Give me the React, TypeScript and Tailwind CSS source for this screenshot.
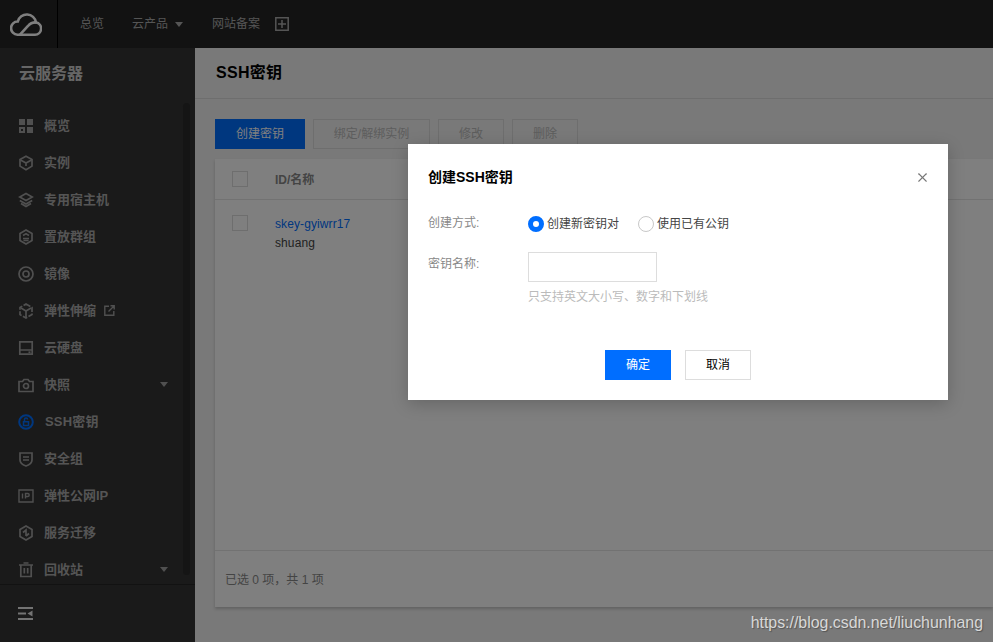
import React from 'react';
import { X } from 'lucide-react';

const FONT = "font-['Liberation_Sans','Noto_Sans_CJK_SC',sans-serif]";

const iconProps = {
  width: 16,
  height: 16,
  viewBox: '0 0 16 16',
  fill: 'none',
  stroke: 'currentColor',
  strokeWidth: 1.7,
};

const icons: Record<string, React.ReactNode> = {
  overview: (
    <svg {...iconProps} fill="currentColor" stroke="none">
      <path d="M1 1h6v6H1zM9 1h6v6H9zM1 9h6v6H1zM9 9h6v6H9z" />
      <path d="M3 11h2v2H3z" fill="#343434" />
    </svg>
  ),
  instance: (
    <svg {...iconProps}>
      <path d="M8 1.200l6 3.300v6.600l-6 3.700-6-3.700V4.500z" />
      <path d="M2.500 5L8 8l5.500-3M8 8v3" />
    </svg>
  ),
  host: (
    <svg {...iconProps}>
      <path d="M8 1.500l6.200 3.500L8 8.500 1.800 5z" />
      <path d="M1.800 8.500L8 12l6.200-3.500M3 11.500L8 14.500l5-3" />
    </svg>
  ),
  group: (
    <svg {...iconProps}>
      <path d="M8 1l6 3.500v7L8 15l-6-3.500v-7z" />
      <path d="M5 6.500L8 4.800l3 1.700M5 9.500h6M5.500 11.500h5" />
    </svg>
  ),
  image: (
    <svg {...iconProps}>
      <circle cx="8" cy="8" r="7" />
      <circle cx="8" cy="8" r="3" />
    </svg>
  ),
  scale: (
    <svg {...iconProps}>
      <path d="M8 1l6 3.500v7L8 15l-6-3.500v-7z" strokeDasharray="5 1.500" />
      <path d="M3 5l5 3 5-3M8 8v6" />
    </svg>
  ),
  disk: (
    <svg {...iconProps}>
      <path d="M1.800 1.800h12.400v12.400H1.800zM2 10h12" />
      <path d="M10.500 12.200h2" />
    </svg>
  ),
  snapshot: (
    <svg {...iconProps}>
      <path d="M1 4.500h3.500L6 2.500h4l1.500 2H15v10H1z" />
      <circle cx="8" cy="9" r="2.500" />
    </svg>
  ),
  ssh: (
    <svg {...iconProps} strokeWidth={2}>
      <circle cx="8" cy="8" r="6.800" />
      <path d="M5.500 7.800h5v3.700h-5zM6.500 7.800V5.500a1.500 1.500 0 013 0" strokeWidth={1.500} />
    </svg>
  ),
  security: (
    <svg {...iconProps}>
      <path d="M2 2h12v7c0 3-3 5-6 6-3-1-6-3-6-6z" />
      <path d="M5 6h6M5 9h6" />
    </svg>
  ),
  ip: (
    <svg {...iconProps} strokeWidth={1.4}>
      <path d="M1 2h14v12H1z" />
      <path d="M4.500 5.500v5M7.500 10.500v-5h2.200a1.500 1.500 0 010 3H7.500" />
    </svg>
  ),
  migrate: (
    <svg {...iconProps}>
      <path d="M8 1l6 3.500v7L8 15l-6-3.500v-7z" />
      <path d="M5 7.500L8 5v6M11 8.500L8 11" />
    </svg>
  ),
  recycle: (
    <svg {...iconProps}>
      <path d="M1 3h14M5.500 1h5M2.800 3v11.500h10.400V3M6.300 6v5.500M9.700 6v5.500" />
    </svg>
  ),
};

const menu = [
  { key: 'overview', label: '概览' },
  { key: 'instance', label: '实例' },
  { key: 'host', label: '专用宿主机' },
  { key: 'group', label: '置放群组' },
  { key: 'image', label: '镜像' },
  { key: 'scale', label: '弹性伸缩', external: true },
  { key: 'disk', label: '云硬盘' },
  { key: 'snapshot', label: '快照', arrow: true },
  { key: 'ssh', label: 'SSH密钥', active: true },
  { key: 'security', label: '安全组' },
  { key: 'ip', label: '弹性公网IP' },
  { key: 'migrate', label: '服务迁移' },
  { key: 'recycle', label: '回收站', arrow: true },
];

function Caret({ className }: { className: string }) {
  return <span className={`h-0 w-0 border-x-[4px] border-t-[5px] border-x-transparent ${className}`} />;
}

function TopBar() {
  return (
    <header className="flex h-12 shrink-0 items-center bg-[#242424] text-xs text-[#aaaaaa]">
      <div className="flex h-12 w-[58px] shrink-0 items-center border-r border-black pb-[1px] pl-[10px]">
        <svg width="32" height="24" viewBox="0 0 32 24" fill="none" stroke="#ffffff" strokeWidth="2.600">
          <path d="M7.500 22.700H25a6.200 6.200 0 001-12.300A9.300 9.300 0 007.800 9.500a6.600 6.600 0 00-.3 13.200z" />
          <path d="M10 22.700l8-8.700c2-2.500 5-3.700 8-3.600" />
        </svg>
      </div>
      <span className="ml-[22px]">总览</span>
      <span className="ml-[28px]">云产品</span>
      <Caret className="ml-[7px] border-t-[#aaaaaa]" />
      <span className="ml-[29px]">网站备案</span>
      <svg className="ml-[15px]" width="14" height="14" viewBox="0 0 14 14" fill="none" stroke="#aaaaaa" strokeWidth="1.500">
        <path d="M.8.800h12.400v12.400H.8zM7 3v8M3 7h8" />
      </svg>
    </header>
  );
}

function Sidebar() {
  return (
    <aside className="relative flex w-[195px] shrink-0 flex-col bg-[#343434]">
      <div className="pl-[19px] pt-[15px] text-base leading-[22px] font-bold text-[#cccccc]">云服务器</div>
      <span className="absolute left-[183px] top-[55px] bottom-[67px] w-[7px] rounded bg-[#2a2a2a]" />
      <nav className="flex-1 overflow-hidden pl-[18px] pt-[22px]">
        {menu.map((item) => (
          <div key={item.key} className="flex h-[37px] items-center pr-[27px] text-[13px] font-semibold text-[#aaaaaa]">
            <span className={item.active ? 'text-[#006eff]' : 'text-[#a0a0a0]'}>{icons[item.key]}</span>
            <span className={`ml-[10px] ${item.active ? 'ml-[11px] tracking-[0.2px]' : ''}`}>{item.label}</span>
            {item.external && (
              <svg className="ml-[8px]" width="11" height="11" viewBox="0 0 11 11" fill="none" stroke="#a0a0a0" strokeWidth="1.400">
                <path d="M5 1.200H.8v9h9V6M4.500 6.500L10 1M6.500 .8h3.700v3.700" />
              </svg>
            )}
            {item.arrow && <Caret className="ml-auto border-t-[#a0a0a0]" />}
          </div>
        ))}
      </nav>
      <div className="flex h-[58px] shrink-0 items-center border-t border-[#242424] pl-[18px]">
        <svg width="15" height="13" viewBox="0 0 15 13" fill="#e6e6e6">
          <path d="M0 0h15v2H0zM0 5.500h8v2H0zM0 11h15v2H0zM14.500 3.500v6L9.500 6.500z" />
        </svg>
      </div>
    </aside>
  );
}

function Toolbar() {
  const disabled = 'flex h-[30px] items-center justify-center border border-[#dddddd] bg-[#f2f2f2] text-xs text-[#bbbbbb]';
  return (
    <div className="flex gap-2 pt-5">
      <button className="h-[30px] w-[90px] bg-[#006eff] text-xs text-white">创建密钥</button>
      <button className={`${disabled} w-[117px]`}>绑定/解绑实例</button>
      <button className={`${disabled} w-[66px]`}>修改</button>
      <button className={`${disabled} w-[66px]`}>删除</button>
    </div>
  );
}

function Checkbox() {
  return <span className="block h-4 w-4 border border-[#dddddd] bg-white" />;
}

function KeyTable() {
  return (
    <div className="mt-[10px] flex h-[448px] flex-col bg-white text-xs shadow-[0_2px_3px_rgba(0,0,0,0.2)]">
      <div className="flex h-[41px] shrink-0 items-center border-b border-[#e5e5e5] pl-[17px]">
        <Checkbox />
        <span className="ml-[27px] pt-[2px] font-bold text-[#888888]">ID/名称</span>
      </div>
      <div className="flex flex-1 items-start pl-[17px] pt-[15px]">
        <Checkbox />
        <div className="ml-[27px] leading-[19px] tracking-[0.1px]">
          <div className="text-[#006eff]">skey-gyiwrr17</div>
          <div className="text-[#444444]">shuang</div>
        </div>
      </div>
      <div className="flex h-[57px] shrink-0 items-center border-t border-[#e5e5e5] pl-[10px] pt-[2px] text-[#888888]">
        已选 0 项，共 1 项
      </div>
    </div>
  );
}

function KeyDialog() {
  return (
    <div className="absolute left-[408px] top-[144px] flex h-[256px] w-[540px] flex-col bg-white px-5 shadow-[0_4px_16px_rgba(0,0,0,0.2)]">
      <div className="flex items-center justify-between pt-[23px]">
        <h3 className="text-sm leading-5 font-bold text-black">创建SSH密钥</h3>
        <X size={15} strokeWidth={1.8} className="mr-[-2px] text-[#777777]" />
      </div>
      <div className="mt-[29px] flex h-4 items-center text-xs">
        <span className="w-[100px] pb-[2px] text-[#888888]">创建方式:</span>
        <span className="h-4 w-4 rounded-full border-[5px] border-[#006eff] bg-white" />
        <span className="ml-[3px] text-[#444444]">创建新密钥对</span>
        <span className="ml-[19px] h-4 w-4 rounded-full border border-[#c8c8c8] bg-white" />
        <span className="ml-[3px] text-[#444444]">使用已有公钥</span>
      </div>
      <div className="mt-[20px] flex text-xs">
        <span className="w-[100px] pt-[4px] text-[#888888]">密钥名称:</span>
        <div>
          <input className="block h-[30px] w-[129px] border border-[#dddddd] bg-white outline-none" />
          <p className="mt-[7px] leading-4 text-[#bbbbbb]">只支持英文大小写、数字和下划线</p>
        </div>
      </div>
      <div className="mt-[45px] flex justify-center gap-[14px] text-xs">
        <button className="h-[30px] w-[66px] bg-[#006eff] text-white">确定</button>
        <button className="h-[30px] w-[66px] border border-[#dddddd] bg-white text-black">取消</button>
      </div>
    </div>
  );
}

export default function App() {
  return (
    <div className={`relative flex h-screen flex-col overflow-hidden bg-[#f2f2f2] ${FONT}`}>
      <TopBar />
      <div className="flex min-h-0 flex-1">
        <Sidebar />
        <main className="min-w-0 flex-1">
          <div className="flex h-[51px] items-center border-b border-[#dddddd] bg-[#f2f2f2] pl-[21px] text-base font-bold tracking-[0.3px] text-black">
            SSH密钥
          </div>
          <div className="pl-5">
            <Toolbar />
            <KeyTable />
          </div>
        </main>
      </div>
      <div className="absolute inset-0 bg-black/50" />
      <KeyDialog />
      <span className="absolute bottom-[9px] right-[10px] text-[15.9px] leading-5 text-[#d8d8d8] [text-shadow:1px_1px_1px_rgba(0,0,0,0.3)]">
        https://blog.csdn.net/liuchunhang
      </span>
    </div>
  );
}
